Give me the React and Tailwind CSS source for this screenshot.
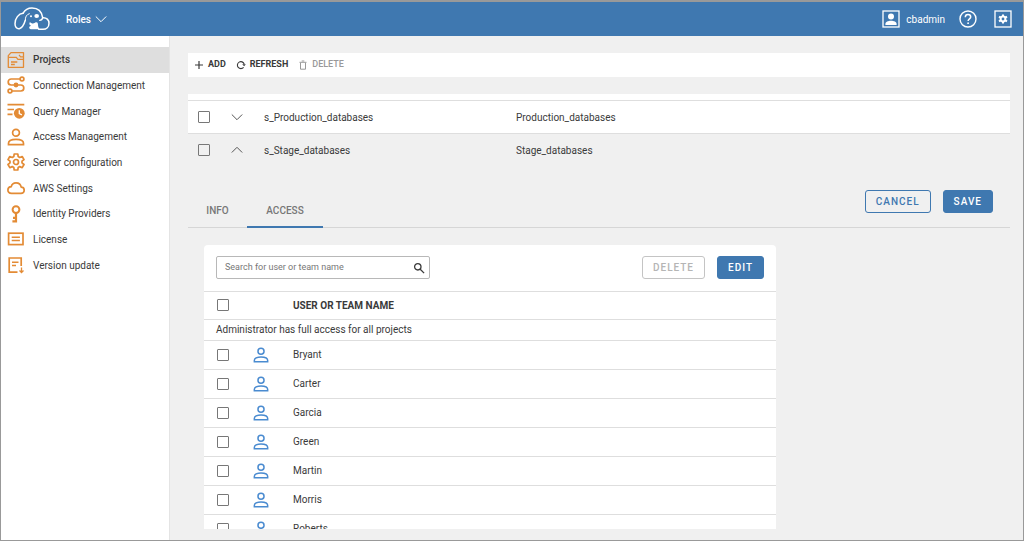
import React from "react";

const Svg = ({ children, className = "", ...rest }) => (
  <svg viewBox="0 0 18 18" fill="none" stroke="currentColor" strokeWidth="1.7" aria-hidden="true" className={`shrink-0 ${className}`} {...rest}>
    {children}
  </svg>
);

const Logo = () => (
  <svg viewBox="0 0 108 72" className="h-6 w-9 shrink-0" fill="none" stroke="#fff" strokeWidth="4.5" strokeLinecap="round" strokeLinejoin="round" aria-hidden="true">
    <path d="M27 19C14 20 3 34 3 50c0 10 5 16 13 15 10-2 14-12 18-25" />
    <path d="M27 19C33 8 43 3 54 3c16 0 29 9 32 29" />
    <path d="M86 32c12-1 19 7 19 17 0 11-8 18-18 18H74" />
    <path d="M86 32c-1 5-4 8-9 8" strokeWidth="4" />
    <path d="M34 40c-1-10 4-18 12-20" strokeWidth="3" />
    <path d="M48 45c4 5 10 6 15 2 5-3 9-1 9 6 0 5 2 10 5 14H55c-7 0-11-3-9-8l5-3c-6-2-6-7-3-11z" fill="#fff" stroke="none" />
    <ellipse cx="68" cy="27" rx="7" ry="6" fill="#fff" stroke="none" />
    <circle cx="51" cy="28" r="3" fill="#fff" stroke="none" />
  </svg>
);

const PersonShape = () => (
  <>
    <circle cx="9" cy="4.8" r="3.4" />
    <path d="M1.5 16.6v-1.3c0-2.8 3.8-4 7.5-4s7.5 1.2 7.5 4v1.3z" />
  </>
);

const icons = {
  projects: (
    <>
      <path d="M1.3 16.3V4.6L4 1.6h12.5v14.7z" strokeWidth="1.3" strokeLinejoin="round" />
      <path d="M1.3 6.3h8l1.6 2h5.6M12 3.9l1.6 2h2.9" strokeWidth="1.2" />
      <path d="M4 11h6.3M4 13.5h3.8" strokeWidth="1.4" />
    </>
  ),
  connection: (
    <>
      <circle cx="15" cy="3" r="1.9" />
      <circle cx="3" cy="15" r="1.9" />
      <path d="M13 3H4.2a3 3 0 0 0 0 6h9.6a3 3 0 0 1 0 6H5" />
      <circle cx="9" cy="9" r="2.4" fill="currentColor" stroke="none" />
    </>
  ),
  query: (
    <>
      <path d="M.5 2.7h16.8M.5 7.5H7M.5 12.3h5" />
      <circle cx="12.3" cy="11.3" r="5.4" fill="currentColor" stroke="none" />
      <path d="M12.3 8.2v3.4l2.6 1.2" stroke="#fff" strokeWidth="1.3" />
    </>
  ),
  access: <PersonShape />,
  server: (
    <>
      <path d="M7.2 1h3.6l.4 2.6 1.5.9 2.5-1 1.8 3.1-2 1.6v1.7l2 1.6-1.8 3.1-2.5-1-1.5.9-.4 2.5H7.2l-.4-2.5-1.5-.9-2.5 1L1 11.5l2-1.6V8.2L1 6.6l1.8-3.1 2.5 1 1.5-.9z" strokeLinejoin="round" />
      <circle cx="9" cy="9" r="2.5" />
    </>
  ),
  cloud: <path d="M4.6 14.3C2.4 14.3.9 13 .9 11c0-1.8 1.5-3.2 3.3-3.3C4.8 5.3 6.7 3.8 9 3.8c2.7 0 4.8 1.8 5.2 4.4 1.8.1 3 1.3 3 3 0 1.8-1.3 3.1-3.2 3.1z" strokeLinejoin="round" />,
  key: (
    <>
      <circle cx="9" cy="4.6" r="3.4" strokeWidth="2" />
      <path d="M9 7.8v9.7M9 16.4H5.4M9 12.9H6" strokeWidth="2.2" />
    </>
  ),
  license: (
    <>
      <rect x="1.6" y="3.2" width="14.4" height="11.4" />
      <path d="M4.7 7.3h8.2M4.7 10.4h8.2" strokeWidth="1.5" />
    </>
  ),
  version: (
    <>
      <path d="M10.5 16.2H2.2V2h12v8" />
      <path d="M5 6.3h6.5M5 9.5h4" strokeWidth="1.5" />
      <path d="M14.5 11.5v5M12.5 14.5l2 2 2-2" strokeWidth="1.3" />
    </>
  ),
};

const nav = [
  ["Projects", "projects"],
  ["Connection Management", "connection"],
  ["Query Manager", "query"],
  ["Access Management", "access"],
  ["Server configuration", "server"],
  ["AWS Settings", "cloud"],
  ["Identity Providers", "key"],
  ["License", "license"],
  ["Version update", "version"],
];

const projects = [
  { id: "s_Production_databases", name: "Production_databases", open: false },
  { id: "s_Stage_databases", name: "Stage_databases", open: true },
];

const users = ["Bryant", "Carter", "Garcia", "Green", "Martin", "Morris", "Roberts"];

const Check = ({ label }) => (
  <input
    type="checkbox"
    aria-label={label}
    className="block size-3 appearance-none rounded-[1px] border border-[#777] bg-transparent checked:bg-[#3f78b0]"
  />
);

const Chevron = ({ up = false, className = "" }) => (
  <svg viewBox="0 0 12 8" fill="none" stroke="currentColor" strokeWidth="1" className={`h-2 w-3 ${className}`} aria-hidden="true">
    <path d={up ? "M.8 6.5 6 1.3l5.2 5.2" : "M.8 1.5 6 6.7l5.2-5.2"} />
  </svg>
);

const Button = ({ kind, children, ...rest }) => {
  const look = {
    solid: "border-[#3f78b0] bg-[#3f78b0] text-white",
    outline: "border-[#3f78b0] text-[#3f78b0]",
    off: "border-[#c4c4c4] text-[#b5b5b5]",
  }[kind];
  return (
    <button type="button" className={`flex h-[23px] items-center rounded-[3px] border px-2.5 text-[10px] font-medium tracking-widest ${look}`} {...rest}>
      {children}
    </button>
  );
};

function Header() {
  return (
    <header className="flex h-[34px] shrink-0 items-center bg-[#3f78b0] pr-[11px] pl-[13px] text-white">
      <Logo />
      <button type="button" className="ml-4 flex items-center gap-1 font-medium">
        Roles
        <Chevron className="h-2 w-2.5" />
      </button>
      <div className="ml-auto flex items-center">
        <button type="button" className="flex items-center gap-1.5">
          <Svg className="size-[18px]">
            <rect x="1" y="1" width="16" height="16" strokeWidth="1.3" />
            <circle cx="9" cy="6.4" r="3" fill="currentColor" stroke="none" />
            <path d="M3.4 15v-1c0-2.2 2.8-3.3 5.6-3.3s5.6 1.1 5.6 3.3v1z" fill="currentColor" stroke="none" />
          </Svg>
          cbadmin
        </button>
        <button type="button" aria-label="Help" className="ml-3.5">
          <Svg className="size-[18px]">
            <circle cx="9" cy="9" r="8" strokeWidth="1.4" />
            <path d="M6.3 7.2c0-1.6 1.2-2.6 2.7-2.6s2.7 1 2.7 2.4c0 1.8-2.6 2-2.6 4.1" strokeWidth="1.5" />
            <circle cx="9.1" cy="13.2" r=".9" fill="currentColor" stroke="none" />
          </Svg>
        </button>
        <button type="button" aria-label="Settings" className="ml-[17px]">
          <Svg className="size-[18px]">
            <rect x="1" y="1" width="16" height="16" strokeWidth="1.3" />
            <circle cx="9" cy="9" r="2.4" strokeWidth="2" />
            <path d="M9 4.4v2M9 11.6v2M5 6.7l1.7 1M11.3 10.3l1.7 1M5 11.3l1.7-1M11.3 7.7l1.7-1" strokeWidth="2" />
          </Svg>
        </button>
      </div>
    </header>
  );
}

function Sidebar() {
  return (
    <nav className="w-[169px] shrink-0 border-r border-[#e4e4e4] bg-white pt-[11px]">
      <ul className="grid h-[231px] grid-rows-9">
        {nav.map(([label, icon], i) => (
          <li key={label}>
            <a
              href={`#${icon}`}
              aria-current={i === 0 ? "page" : undefined}
              className={`flex h-full items-center gap-2 pl-1.5 ${i === 0 ? "bg-[#dedede] font-medium" : ""}`}
            >
              <Svg className="size-[18px] text-[#e38b35]">{icons[icon]}</Svg>
              {label}
            </a>
          </li>
        ))}
      </ul>
    </nav>
  );
}

function Toolbar() {
  return (
    <div className="flex h-6 shrink-0 items-center gap-2.5 bg-white pl-1.5 text-[9px] font-medium">
      <button type="button" className="flex items-center gap-1 font-bold">
        <Svg className="size-2.5" viewBox="0 0 10 10" strokeWidth="1.2">
          <path d="M5 1v8M1 5h8" />
        </Svg>
        ADD
      </button>
      <button type="button" className="flex items-center gap-1 font-bold">
        <Svg className="size-2.5" viewBox="0 0 10 10" strokeWidth="1.1">
          <path d="M7.6 7.4A3.5 3.5 0 1 1 8.2 4" />
          <path d="M6.2 4.2h3.6L8.1 6.2z" fill="currentColor" stroke="none" />
        </Svg>
        REFRESH
      </button>
      <button type="button" disabled className="flex items-center gap-1 text-[#999]">
        <Svg className="size-2.5" viewBox="0 0 10 10" strokeWidth="1">
          <path d="M2.5 2.8v6.4h5V2.8M1.5 2.3h7M3.7 1h2.6" />
        </Svg>
        DELETE
      </button>
    </div>
  );
}

function AccessCard() {
  return (
    <section className="mt-[17px] ml-4 min-h-0 w-full max-w-[572px] flex-1 overflow-hidden rounded-t bg-white">
      <div className="flex h-[46px] items-center gap-3 px-3">
        <label className="flex h-[23px] w-[214px] items-center rounded-xs border border-[#b8b8b8] pr-1 pl-2">
          <input type="text" aria-label="Search for user or team name" placeholder="Search for user or team name" className="min-w-0 flex-1 bg-transparent text-[9px] outline-none placeholder:text-[#777]" />
          <Svg className="size-3" viewBox="0 0 12 12" strokeWidth="1.3">
            <circle cx="4.8" cy="4.8" r="3.2" />
            <path d="M7.2 7.2l3.9 3.9" />
          </Svg>
        </label>
        <div className="ml-auto flex gap-3">
          <Button kind="off" disabled>DELETE</Button>
          <Button kind="solid">EDIT</Button>
        </div>
      </div>
      <table className="w-full table-fixed border-collapse text-left">
        <colgroup>
          <col className="w-[49px]" />
          <col className="w-10" />
          <col />
        </colgroup>
        <thead>
          <tr className="h-7 border-y border-[#dedede]">
            <th className="pl-[13px]"><Check label="Select all" /></th>
            <th />
            <th className="font-bold">USER OR TEAM NAME</th>
          </tr>
        </thead>
        <tbody>
          <tr className="h-[21px] border-b border-[#dedede]">
            <td colSpan="3" className="pl-3">Administrator has full access for all projects</td>
          </tr>
          {users.map((user) => (
            <tr key={user} className="h-[29px] border-b border-[#dedede]">
              <td className="pl-[13px]"><Check label={`Select ${user}`} /></td>
              <td><Svg className="size-4 text-[#4a8bd0]"><PersonShape /></Svg></td>
              <td>{user}</td>
            </tr>
          ))}
        </tbody>
      </table>
    </section>
  );
}

export default function App() {
  return (
    <div className="flex h-screen min-h-[300px] flex-col overflow-hidden border border-t-2 border-[#999] bg-[#f0f0f0] font-['Roboto',sans-serif] text-[10px] text-[#3a3a3a]">
      <Header />
      <div className="flex min-h-0 flex-1">
        <Sidebar />
        <main className="flex min-w-0 flex-1 flex-col pt-[17px] pr-[13px] pb-[11px] pl-[18px]">
          <Toolbar />
          <div className="mt-[17px] h-1.5 shrink-0 bg-white" />
          <table className="w-full shrink-0 table-fixed border-collapse">
            <colgroup>
              <col className="w-[43px]" />
              <col className="w-[33px]" />
              <col className="w-[252px]" />
              <col />
            </colgroup>
            <tbody>
              {projects.map((p) => (
                <tr key={p.id} className={`h-[33px] border-t border-[#dedede] ${p.open ? "" : "bg-white"}`}>
                  <td className="pl-2.5"><Check label={`Select ${p.name}`} /></td>
                  <td>
                    <button type="button" aria-expanded={p.open} aria-label={`Toggle ${p.name}`} className="block text-[#555]">
                      <Chevron up={p.open} />
                    </button>
                  </td>
                  <td>{p.id}</td>
                  <td>{p.name}</td>
                </tr>
              ))}
            </tbody>
          </table>
          <div className="mt-[23px] flex h-[38px] shrink-0 justify-between border-b border-[#d6d6d6] pr-[17px]">
            <div role="tablist" className="flex font-medium text-[#777]">
              <button type="button" role="tab" aria-selected="false" className="-mb-px w-[59px] border-b-2 border-transparent pt-1.5">INFO</button>
              <button type="button" role="tab" aria-selected="true" className="-mb-px w-[76px] border-b-2 border-[#3f78b0] pt-1.5">ACCESS</button>
            </div>
            <div className="flex gap-3">
              <Button kind="outline">CANCEL</Button>
              <Button kind="solid">SAVE</Button>
            </div>
          </div>
          <AccessCard />
        </main>
      </div>
    </div>
  );
}
